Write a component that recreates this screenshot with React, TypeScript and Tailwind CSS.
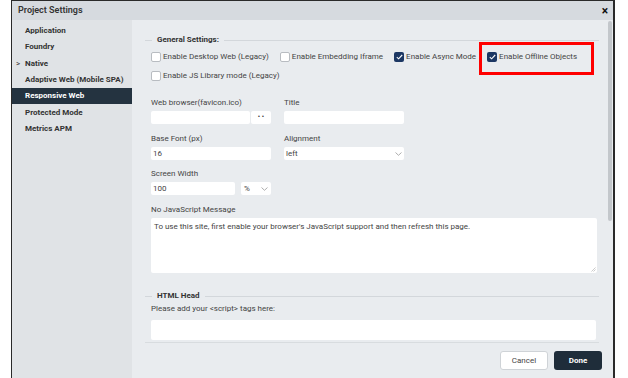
import React from "react";

const font = { fontFamily: "Roboto, 'Liberation Sans', sans-serif" };

const navItems = [
  { label: "Application" },
  { label: "Foundry" },
  { label: "Native", caret: true },
  { label: "Adaptive Web (Mobile SPA)" },
  { label: "Responsive Web", active: true },
  { label: "Protected Mode" },
  { label: "Metrics APM" },
];

const Check = ({ checked, label }: { checked?: boolean; label: string }) => (
  <label className="h-[12px] flex items-center gap-[2px] text-[8px] text-[#444] whitespace-nowrap">
    {checked ? (
      <span className="w-[10px] h-[10px] rounded-[2px] bg-[#1c3763] flex items-center justify-center">
        <svg width="7" height="6" viewBox="0 0 7 6">
          <path d="M0.8 3.2 L2.6 4.8 L6.2 1" fill="none" stroke="#fff" strokeWidth="1.1" />
        </svg>
      </span>
    ) : (
      <span className="w-[10px] h-[10px] rounded-[2px] bg-white border border-[#b8bcc1]" />
    )}
    <span>{label}</span>
  </label>
);

const Chevron = () => (
  <svg width="7" height="4" viewBox="0 0 7 4">
    <path d="M0.5 0.5 L3.5 3.3 L6.5 0.5" fill="none" stroke="#999" strokeWidth="0.8" />
  </svg>
);

const Legend = ({ title }: { title: string }) => (
  <div className="h-[12px] flex items-center">
    <div className="w-[7px] h-px bg-[#d3d7db]" />
    <span className="px-[5px] text-[8px] font-bold text-[#333]">{title}</span>
    <div className="flex-1 h-px bg-[#d3d7db]" />
  </div>
);

const Label = ({ children }: { children: React.ReactNode }) => (
  <div className="h-[12px] leading-[12px] whitespace-nowrap">{children}</div>
);

export default function App() {
  return (
    <div className="w-[628px] h-[378px] bg-white overflow-hidden" style={font}>
      <div className="ml-[11px] w-[604px] h-[378px] border-t border-l border-r-2 border-[#2a2a2a] flex flex-col">
        <div className="h-[19px] shrink-0 bg-[#d6dadf] flex items-center justify-between pl-[6px] pr-[5px]">
          <span className="text-[9px] font-semibold text-[#333]">Project Settings</span>
          <span className="text-[12px] font-bold text-[#111] leading-none">×</span>
        </div>
        <div className="flex flex-1 min-h-0">
          <div className="w-[120px] shrink-0 bg-[#e0e3e6] pt-[3px]">
            {navItems.map((it) => (
              <div
                key={it.label}
                className={`h-[16.3px] flex items-center text-[8px] font-bold whitespace-nowrap ${
                  it.active ? "bg-[#243340] text-white" : "text-[#333]"
                }`}
              >
                <span className="w-[13px] pl-[4px] font-normal text-[8px]">{it.caret ? ">" : ""}</span>
                <span>{it.label}</span>
              </div>
            ))}
          </div>
          <div className="flex-1 bg-[#e9ecef] flex min-w-0">
            <div className="flex-1 pl-[13px] pr-[7px] pt-[14px]">
              <Legend title="General Settings:" />
              <div className="pl-[6px] mt-[5px] flex flex-col gap-[7px]">
                <div className="flex gap-[11px]">
                  <Check label="Enable Desktop Web (Legacy)" />
                  <Check label="Enable Embedding Iframe" />
                  <Check checked label="Enable Async Mode" />
                  <div className="relative">
                    <Check checked label="Enable Offline Objects" />
                    <div className="absolute left-[-8px] top-[-9px] w-[115px] h-[33px] border-[3px] border-[#f00]" />
                  </div>
                </div>
                <Check label="Enable JS Library mode (Legacy)" />
              </div>
              <div className="pl-[6px] mt-[15px] text-[8px] text-[#444] flex flex-col">
                <div className="flex gap-[13px]">
                  <div className="w-[120px]">
                    <Label>Web browser(favicon.ico)</Label>
                    <div className="flex mt-[2px] gap-px">
                      <div className="flex-1 h-[13px] bg-white rounded-[2px]" />
                      <div className="w-[20px] h-[13px] bg-white rounded-[2px] flex items-center justify-center text-[7px] text-[#333]">• •</div>
                    </div>
                  </div>
                  <div className="w-[120px]">
                    <Label>Title</Label>
                    <div className="mt-[2px] h-[13px] bg-white rounded-[2px]" />
                  </div>
                </div>
                <div className="flex gap-[13px] mt-[9px]">
                  <div className="w-[120px]">
                    <Label>Base Font (px)</Label>
                    <div className="mt-[2px] h-[13px] bg-white rounded-[2px] px-[2px] flex items-center">16</div>
                  </div>
                  <div className="w-[120px]">
                    <Label>Alignment</Label>
                    <div className="mt-[2px] h-[13px] bg-white rounded-[2px] px-[2px] flex items-center justify-between">
                      <span>left</span>
                      <Chevron />
                    </div>
                  </div>
                </div>
                <div className="mt-[8px]">
                  <Label>Screen Width</Label>
                  <div className="flex mt-[2px] gap-[6px]">
                    <div className="w-[84px] h-[13px] bg-white rounded-[2px] px-[2px] flex items-center">100</div>
                    <div className="w-[30px] h-[13px] bg-white rounded-[2px] px-[3px] flex items-center justify-between">
                      <span>%</span>
                      <Chevron />
                    </div>
                  </div>
                </div>
                <div className="mt-[9px]">
                  <Label>No JavaScript Message</Label>
                  <div className="relative mt-[2px] w-[446px] h-[55px] bg-white rounded-[2px] px-[3px] pt-[3px] leading-[12px]">
                    To use this site, first enable your browser's JavaScript support and then refresh this page.
                    <svg className="absolute right-[1px] bottom-[1px]" width="5" height="5" viewBox="0 0 5 5">
                      <path d="M4.5 0.5 L0.5 4.5 M4.5 2.5 L2.5 4.5" stroke="#aaa" strokeWidth="0.6" />
                    </svg>
                  </div>
                </div>
              </div>
              <div className="mt-[17px]">
                <Legend title="HTML Head" />
              </div>
              <div className="pl-[6px] pr-[3px] mt-[1px] text-[8px] text-[#444]">
                <Label>Please add your &lt;script&gt; tags here:</Label>
                <div className="mt-[5px] h-[20px] bg-white rounded-[2px]" />
              </div>
              <div className="h-px bg-[#d8dcdf] mt-[2px]" />
              <div className="flex justify-end gap-[6px] mt-[8px] mr-[-3px]">
                <button className="w-[48px] h-[19px] bg-white border border-[#cfd3d7] rounded-[3px] text-[8px] text-[#444]">Cancel</button>
                <button className="w-[48px] h-[19px] bg-[#1f2d3a] rounded-[3px] text-[8px] font-bold text-white">Done</button>
              </div>
            </div>
            <div className="w-[7px] pt-[1px] flex justify-center">
              <div className="w-[4px] h-[200px] bg-[#c3c7cb] rounded-[2px]" />
            </div>
          </div>
        </div>
      </div>
    </div>
  );
}
